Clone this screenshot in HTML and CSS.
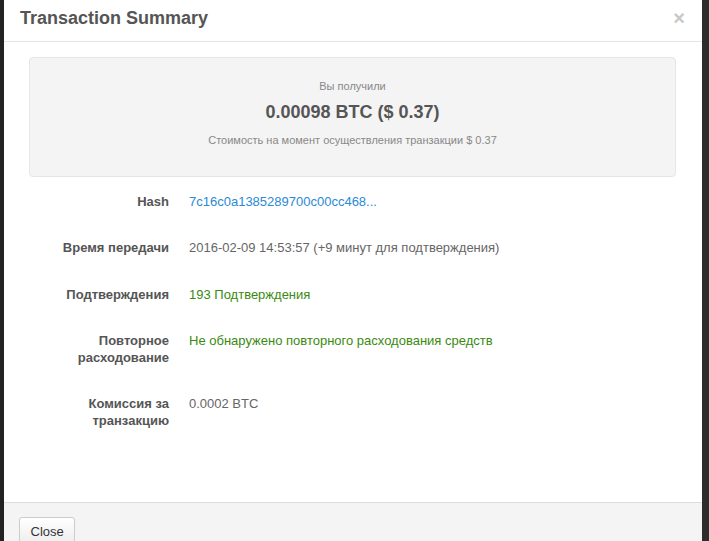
FILE: index.html
```html
<!DOCTYPE html>
<html lang="ru">
<head>
    <meta charset="UTF-8">
    <meta name="viewport" content="width=device-width, initial-scale=1.0">
    <title>Transaction Summary</title>
    <link rel="stylesheet" href="styles.css">
</head>
<body>
    <div class="modal">
        <div class="modal-header">
            <h4 class="modal-title">Transaction Summary</h4>
            <button class="close-x">&times;</button>
        </div>

        <div class="modal-body">
            <div class="well">
                <p class="well-label">Вы получили</p>
                <p class="well-amount">0.00098 BTC ($ 0.37)</p>
                <p class="well-note">Стоимость на момент осуществления транзакции $ 0.37</p>
            </div>

            <div class="info-row">
                <div class="info-label">Hash</div>
                <div class="info-value"><a href="#" class="hash-link">7c16c0a1385289700c00cc468...</a></div>
            </div>
            <div class="info-row">
                <div class="info-label">Время передачи</div>
                <div class="info-value">2016-02-09 14:53:57 (+9 минут для подтверждения)</div>
            </div>
            <div class="info-row">
                <div class="info-label">Подтверждения</div>
                <div class="info-value ok">193 Подтверждения</div>
            </div>
            <div class="info-row">
                <div class="info-label">Повторное расходование</div>
                <div class="info-value ok">Не обнаружено повторного расходования средств</div>
            </div>
            <div class="info-row">
                <div class="info-label">Комиссия за транзакцию</div>
                <div class="info-value">0.0002 BTC</div>
            </div>
        </div>

        <div class="modal-footer">
            <button class="btn-close">Close</button>
        </div>
    </div>
</body>
</html>
```

FILE: styles.css
```css
html,
body {
    margin: 0;
    padding: 0;
    height: 100%;
}
body {
    font-family: 'Liberation Sans', Arial, sans-serif;
    font-size: 13px;
    color: #555;
    background: #222;
    overflow: hidden;
}
.modal {
    margin-left: 4px;
    width: 698px;
    height: 100vh;
    background-color: #fff;
    overflow: hidden;
    box-shadow: 7px 0 0 #2d2d2d;
}
.modal-header {
    display: flex;
    align-items: center;
    justify-content: space-between;
    height: 42px;
    box-sizing: border-box;
    padding: 0 16px 5px;
    border-bottom: 1px solid #e5e5e5;
}
.modal-title {
    margin: 0;
    font-size: 18px;
    font-weight: bold;
    line-height: 22px;
    color: #555;
}
button.close-x {
    background: none;
    border: none;
    padding: 0;
    margin-right: 1px;
    font-family: 'Liberation Sans', Arial, sans-serif;
    font-size: 20px;
    font-weight: bold;
    line-height: 20px;
    color: #c8c8c8;
    cursor: pointer;
}
.modal-body {
    min-height: 460px;
    box-sizing: border-box;
    padding: 15px 26px 0 25px;
}
.well {
    height: 120px;
    box-sizing: border-box;
    padding-top: 20px;
    background-color: #f4f4f4;
    border: 1px solid #e6e6e6;
    border-radius: 4px;
    text-align: center;
}
.well p {
    margin: 0;
}
.well-label {
    font-size: 11px;
    line-height: 16px;
    color: #888;
}
.well-amount {
    margin-top: 6px !important;
    font-size: 18px;
    font-weight: bold;
    line-height: 24px;
    color: #555;
}
.well-note {
    margin-top: 8px !important;
    font-size: 11px;
    line-height: 16px;
    color: #888;
}
.info-row {
    display: flex;
    gap: 20px;
    margin-top: 29.3px;
    line-height: 17px;
}
.well + .info-row {
    margin-top: 16px;
}
.info-label {
    width: 140px;
    flex-shrink: 0;
    text-align: right;
    font-weight: bold;
    color: #555;
}
.info-value {
    color: #666;
}
.hash-link {
    color: #2a8ad4;
    text-decoration: none;
}
.info-value.ok {
    color: #3a8a10;
}
.modal-footer {
    padding: 14px 15px;
    background-color: #f4f4f4;
    border-top: 1px solid #dddddd;
}
.btn-close {
    font-family: 'Liberation Sans', Arial, sans-serif;
    font-size: 13px;
    color: #333;
    padding: 6px 10.5px;
    background: linear-gradient(to bottom, #ffffff, #ececec);
    border: 1px solid #cccccc;
    border-radius: 3px;
    cursor: pointer;
}
```
